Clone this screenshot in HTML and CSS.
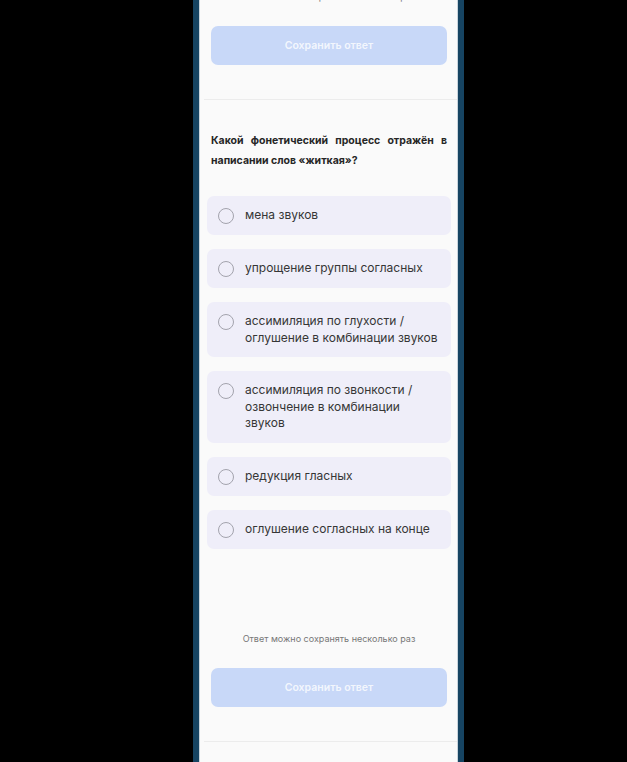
FILE: index.html
```html
<!DOCTYPE html>
<html lang="ru">
<head>
    <meta charset="UTF-8">
    <meta name="viewport" content="width=device-width, initial-scale=1.0">
    <title>Задание</title>
    <link rel="stylesheet" href="styles.css">
</head>
<body>
    <div class="device">
        <div class="screen">
            <section class="task task-tail">
                <p class="hint">Ответ можно сохранять несколько раз</p>
                <button class="save" disabled>Сохранить ответ</button>
            </section>

            <section class="task">
                <p class="question">Какой фонетический процесс отражён в написании слов «житкая»?</p>
                <ul class="options">
                    <li class="option"><span class="radio"></span><span class="label">мена звуков</span></li>
                    <li class="option"><span class="radio"></span><span class="label">упрощение группы согласных</span></li>
                    <li class="option"><span class="radio"></span><span class="label">ассимиляция по глухости / оглушение в комбинации звуков</span></li>
                    <li class="option"><span class="radio"></span><span class="label">ассимиляция по звонкости / озвончение в комбинации звуков</span></li>
                    <li class="option"><span class="radio"></span><span class="label">редукция гласных</span></li>
                    <li class="option"><span class="radio"></span><span class="label">оглушение согласных на конце</span></li>
                </ul>
                <p class="hint">Ответ можно сохранять несколько раз</p>
                <button class="save" disabled>Сохранить ответ</button>
            </section>

            <section class="task task-next"></section>
        </div>
    </div>
</body>
</html>
```

FILE: styles.css
```css
html, body {
    margin: 0;
    padding: 0;
    height: 100%;
    overflow: hidden;
    background-color: #000;
}
body {
    font-family: Inter, "Noto Sans", sans-serif;
}
.device {
    margin-left: 193px;
    width: 259px;
    height: 762px;
    border-left: 6px solid #164462;
    border-right: 6px solid #164462;
    overflow: hidden;
}
.screen {
    height: calc(100% + 9px);
    background-color: #fafafa;
    border-left: 1px solid #c9d4dc;
    border-right: 1px solid #c9d4dc;
    margin-top: -9px;
}
.task {
    margin-left: 4px;
    padding: 31px 10px 34px 7px;
    border-bottom: 1px solid #ececec;
}
.task-tail {
    padding-top: 0;
}
.task-next {
    border-bottom: none;
}
.hint {
    margin: 0 0 23px;
    font-size: 9px;
    line-height: 12px;
    color: #777;
    text-align: center;
}
.save {
    display: block;
    width: 100%;
    height: 39px;
    border: none;
    border-radius: 7px;
    background-color: #c8d8f8;
    color: rgba(255, 255, 255, 0.8);
    font-family: inherit;
    font-size: 10.5px;
    font-weight: 600;
}
.question {
    margin: 0 0 25px;
    font-size: 10.5px;
    font-weight: 700;
    line-height: 20px;
    color: #262626;
    text-align: justify;
}
.options {
    list-style: none;
    margin: 0 -4px 84px;
    padding: 0;
    display: flex;
    flex-direction: column;
    gap: 14px;
}
.option {
    display: flex;
    align-items: flex-start;
    gap: 11px;
    padding: 11px;
    border-radius: 7px;
    background-color: #efeef9;
}
.radio {
    flex: none;
    width: 14px;
    height: 14px;
    margin-top: 1px;
    border: 1.5px solid #a3a3ad;
    border-radius: 50%;
}
.label {
    font-size: 12px;
    line-height: 16.5px;
    color: #363636;
}
```
